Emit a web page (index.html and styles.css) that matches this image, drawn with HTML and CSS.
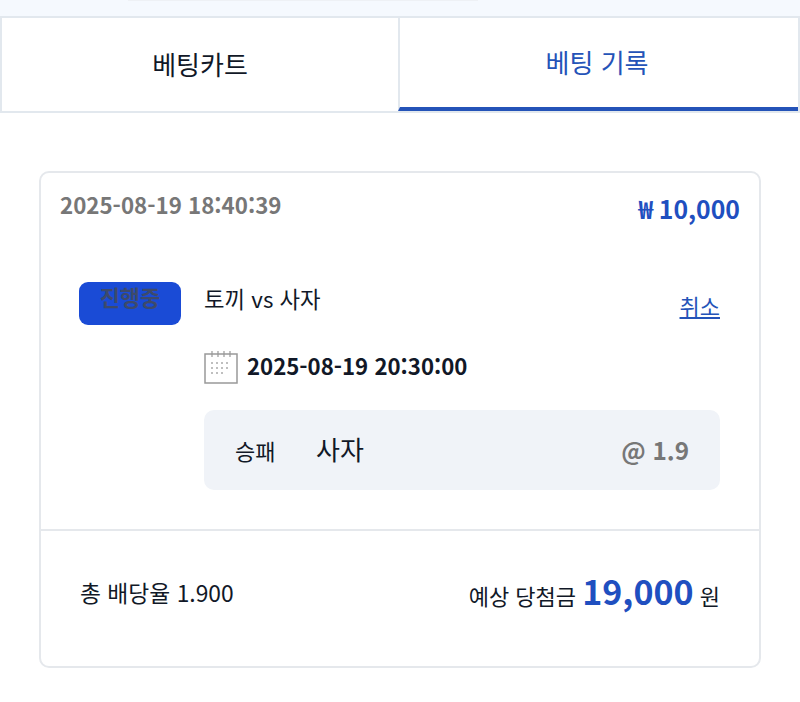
FILE: index.html
```html
<!DOCTYPE html>
<html lang="ko">
<head>
    <meta charset="UTF-8">
    <meta name="viewport" content="width=device-width, initial-scale=1.0">
    <title>베팅 기록</title>
    <link rel="stylesheet" href="styles.css">
</head>
<body>
    <div class="top-strip"><div class="top-line"></div></div>
    <div class="tabs">
        <div class="tab">베팅카트</div>
        <div class="tab tab-active">베팅 기록</div>
    </div>

    <div class="content">
        <div class="card">
            <div class="card-head">
                <div class="bet-time">2025-08-19 18:40:39</div>
                <div class="bet-amount">₩ 10,000</div>
            </div>

            <div class="card-body">
                <div class="status">진행중</div>
                <div class="match">
                    <div class="match-top">
                        <div class="teams">토끼 vs 사자</div>
                        <a class="cancel" href="#">취소</a>
                    </div>
                    <div class="match-date">
                        <svg class="calendar" width="34" height="34" viewBox="0 0 34 34">
                            <rect x="1" y="4" width="32" height="29" fill="#fff" stroke="#999" stroke-width="1.5"/>
                            <path d="M8 1v6M14 1v6M20 1v6M26 1v6" stroke="#999" stroke-width="1.2"/>
                            <path d="M7 13h2M12 13h2M17 13h2M22 13h2M7 18h2M12 18h2M17 18h2M22 18h2M7 23h2M12 23h2M17 23h2" stroke="#aaa" stroke-width="1.5"/>
                        </svg>
                        <span>2025-08-19 20:30:00</span>
                    </div>
                    <div class="pick">
                        <span class="pick-type">승패</span>
                        <span class="pick-name">사자</span>
                        <span class="pick-odds">@ 1.9</span>
                    </div>
                </div>
            </div>

            <div class="card-foot">
                <div class="total-odds">총 배당율 1.900</div>
                <div class="payout">예상 당첨금 <strong>19,000</strong> 원</div>
            </div>
        </div>
    </div>
</body>
</html>
```

FILE: styles.css
```css
body {
    margin: 0;
    background-color: white;
    font-family: "Noto Sans CJK KR", "Noto Sans", sans-serif;
    color: #111827;
}

.top-strip {
    height: 16px;
    background-color: #f5f9fe;
    display: flex;
    justify-content: center;
}

.top-line {
    width: 350px;
    height: 1px;
    margin-right: 194px;
    background-color: #eef1f5;
}

.tabs {
    display: flex;
    height: 97px;
    box-sizing: border-box;
    border: 2px solid #e2e8ee;
}

.tab {
    width: 396px;
    display: flex;
    align-items: center;
    justify-content: center;
    font-size: 26px;
    padding-bottom: 2px;
    box-sizing: border-box;
}

.tab-active {
    width: 400px;
    color: #2453b8;
    border-left: 2px solid #e2e8ee;
    border-bottom: 4px solid #2453b8;
    padding-right: 4px;
    padding-bottom: 2px;
}

.content {
    padding: 58px 39px 35px;
}

.card {
    border: 2px solid #e5e8ec;
    border-radius: 10px;
}

.card-head {
    display: flex;
    justify-content: space-between;
    padding: 15px 19px 2px;
}

.bet-time {
    font-size: 22.3px;
    font-weight: 700;
    color: #777;
    line-height: 32px;
}

.bet-amount {
    font-size: 24.8px;
    font-weight: 700;
    color: #1f4fc0;
    line-height: 40px;
}

.card-body {
    display: flex;
    padding: 52px 39px 39px 38px;
    gap: 23px;
}

.status {
    width: 102px;
    height: 43px;
    background-color: #1a4bd6;
    border-radius: 9px;
    color: #3d4a6b;
    font-size: 22px;
    font-weight: 700;
    line-height: 28px;
    text-align: center;
}

.match {
    flex: 1;
}

.match-top {
    display: flex;
    justify-content: space-between;
    align-items: flex-start;
    height: 66px;
}

.teams {
    font-size: 22.3px;
    line-height: 32px;
}

.cancel {
    margin-top: 5px;
    font-size: 22px;
    line-height: 36px;
    color: #2453b8;
}

.match-date {
    display: flex;
    align-items: center;
    gap: 9px;
    font-size: 22.2px;
    font-weight: 700;
    height: 34px;
}

.calendar {
    margin-top: 4px;
}

.pick {
    display: flex;
    align-items: center;
    height: 80px;
    margin-top: 28px;
    padding: 0 31px;
    background-color: #f0f3f8;
    border-radius: 10px;
}

.pick-type {
    width: 81px;
    font-size: 22px;
}

.pick-name {
    flex: 1;
    font-size: 26px;
    padding-bottom: 4px;
}

.pick-odds {
    font-size: 24.3px;
    font-weight: 700;
    color: #777;
    padding-bottom: 2px;
}

.card-foot {
    display: flex;
    justify-content: space-between;
    align-items: center;
    height: 135px;
    padding: 0 39px;
    border-top: 2px solid #e5e8ec;
}

.total-odds {
    font-size: 22.8px;
    padding-bottom: 12px;
}

.payout {
    font-size: 22px;
    padding-bottom: 16px;
}

.payout strong {
    font-size: 34px;
    font-weight: 700;
    color: #1f4fc0;
}
```
